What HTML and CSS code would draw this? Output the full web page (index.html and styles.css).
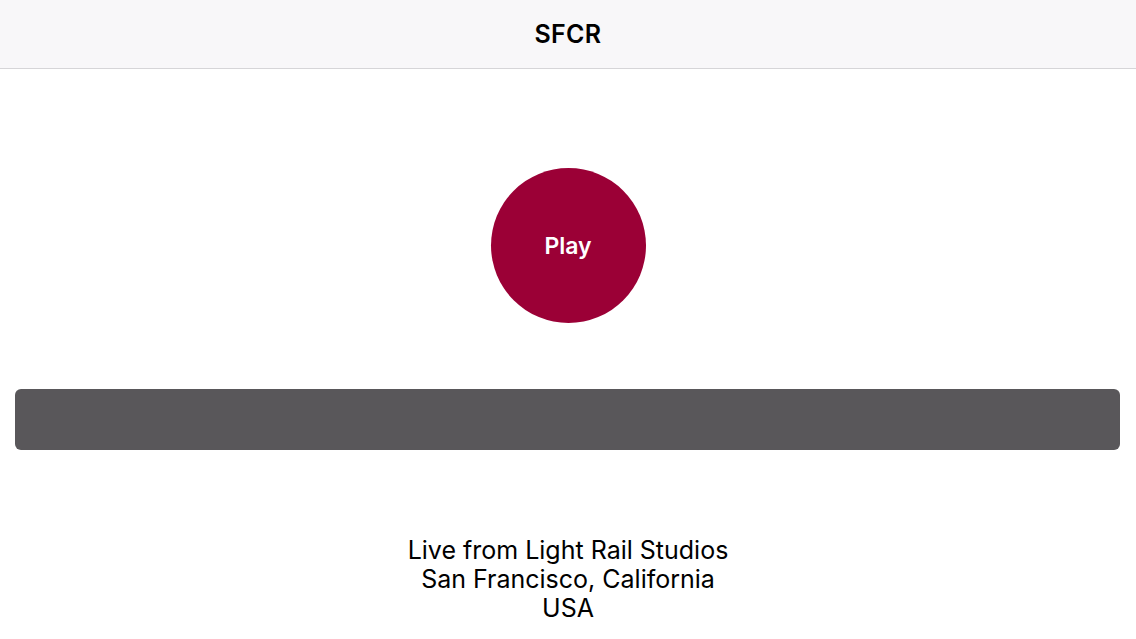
FILE: index.html
```html
<!DOCTYPE html>
<html lang="en">
  <head>
    <meta charset="UTF-8" />
    <meta name="viewport" content="width=device-width, initial-scale=1.0" />
    <title>SFCR</title>
    <link rel="stylesheet" href="styles.css">
  </head>
  <body>
    <div class="nav-bar">
      <div class="nav-title">SFCR</div>
    </div>

    <div class="player">
      <div class="play-button">Play</div>
    </div>

    <div class="status-bar"></div>

    <div class="info">
      Live from Light Rail Studios<br />
      San Francisco, California<br />
      USA
    </div>
  </body>
</html>
```

FILE: styles.css
```css
html,
body {
  margin: 0;
  padding: 0;
}

body {
  width: 1136px;
  height: 639px;
  overflow: hidden;
  background: #ffffff;
  font-family: Inter, "Liberation Sans", sans-serif;
  color: #000000;
}

.nav-bar {
  height: 68px;
  display: flex;
  align-items: center;
  justify-content: center;
  background: #f8f7f9;
  border-bottom: 1px solid #d6d5d8;
}

.nav-title {
  font-size: 25px;
  font-weight: 600;
  letter-spacing: 0.3px;
}

.player {
  display: flex;
  justify-content: center;
  padding-top: 99px;
}

.play-button {
  width: 155px;
  height: 155px;
  border-radius: 50%;
  background: #9b0036;
  color: #ffffff;
  display: flex;
  align-items: center;
  justify-content: center;
  font-size: 23px;
  font-weight: 600;
  cursor: pointer;
}

.status-bar {
  height: 61px;
  margin: 66px 16px 0 15px;
  border-radius: 6px;
  background: #59575a;
}

.info {
  margin-top: 86px;
  text-align: center;
  font-size: 25px;
  line-height: 29px;
}
```
